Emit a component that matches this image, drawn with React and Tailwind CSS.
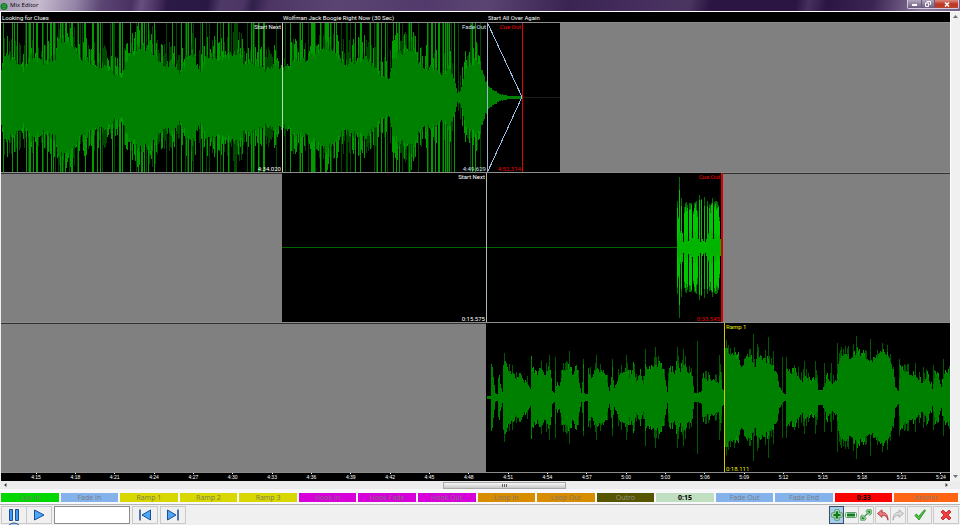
import { useState } from "react";
import clsx from "clsx";

// small seeded generator so the peaks are the same on every load
const seeded = (seed) => () => {
  seed = (seed * 1664525 + 1013904223) % 4294967296;
  return seed / 4294967296;
};

// [x, half height] key points, x runs over the 949 units of a lane
const LOOKING = [
  [0, 30], [5, 44], [14, 38], [22, 28], [29, 42], [45, 36], [54, 40], [56, 60], [70, 56], [75, 46],
  [85, 38], [95, 34], [108, 30], [112, 22], [121, 22], [126, 40], [140, 54], [150, 52], [157, 38],
  [165, 33], [173, 38], [178, 24], [190, 50], [199, 26], [205, 40], [215, 42], [225, 40], [235, 46],
  [243, 35], [255, 36], [265, 28], [275, 36], [282, 28], [295, 38], [305, 40], [318, 50], [325, 54],
  [335, 42], [345, 35], [365, 42], [375, 28], [380, 20], [388, 20], [392, 42], [403, 48], [410, 54],
  [418, 34], [430, 30], [440, 24], [448, 30], [454, 14], [456, 5], [459, 6], [465, 30], [475, 38],
  [479, 34], [482, 22], [487, 11], [492, 7], [499, 3], [508, 1], [522, 1],
];

const START_ALL = [
  [486, 1], [489, 1], [490, 36], [492, 20], [494, 4], [496, 3], [497, 20], [499, 14], [501, 5],
  [502, 34], [505, 36], [506, 27], [510, 24], [512, 25], [515, 18], [519, 25], [523, 14], [526, 14],
  [529, 8], [530, 38], [531, 26], [535, 22], [539, 30], [544, 22], [547, 30], [549, 22], [551, 6],
  [553, 4], [554, 28], [555, 12], [558, 12], [562, 26], [568, 28], [572, 23], [575, 30], [578, 14],
  [580, 4], [582, 28], [583, 4], [586, 3], [587, 28], [590, 19], [595, 30], [599, 26], [603, 26],
  [605, 17], [608, 6], [611, 26], [613, 9], [619, 24], [625, 28], [628, 20], [632, 30], [635, 15],
  [639, 25], [642, 12], [644, 30], [648, 29], [654, 32], [660, 33], [664, 17], [666, 5], [668, 28],
  [673, 24], [676, 33], [679, 27], [683, 34], [687, 24], [691, 20], [693, 4], [696, 4], [698, 5],
  [700, 6], [701, 20], [707, 17], [712, 17], [717, 14], [719, 26], [721, 8], [723, 5], [724, 50],
  [727, 42], [731, 43], [737, 40], [741, 30], [745, 44], [751, 36], [754, 30], [756, 43], [762, 40],
  [769, 32], [775, 27], [778, 10], [782, 4], [784, 3], [785, 30], [789, 25], [795, 24], [801, 15],
  [803, 24], [809, 14], [815, 20], [817, 8], [821, 7], [826, 20], [831, 13], [836, 18], [837, 34],
  [842, 44], [849, 41], [855, 44], [863, 41], [869, 37], [879, 44], [886, 42], [892, 28], [894, 10],
  [897, 6], [899, 30], [904, 25], [913, 22], [921, 14], [926, 22], [931, 8], [933, 20], [936, 25],
  [940, 10], [943, 24], [949, 25],
];

const START_ALL_SPIKES = {
  554: 40, 548: 42, 568: 46, 582: 38, 595: 42, 611: 38, 625: 42, 644: 48, 654: 50, 676: 50, 682: 48,
  696: 56, 718: 42, 752: 63, 757: 50, 767: 60, 772: 46, 781: 40, 785: 40, 803: 36, 814: 36, 823: 34,
  830: 34, 836: 54, 842: 48, 855: 61, 865: 46, 869: 58, 886: 52, 892: 30, 898: 38, 907: 30, 914: 34,
  922: 30, 932: 32, 942: 38,
};

const level = (points, x) => {
  const i = points.findIndex((p) => p[0] > x);
  if (i < 1) return i === 0 ? 0 : points[points.length - 1][1];
  const [x0, y0] = points[i - 1];
  const [x1, y1] = points[i];
  return y0 + ((y1 - y0) * (x - x0)) / (x1 - x0);
};

const bar = (x, up, down = up, mid = 74) =>
  `M${x} ${Math.round(mid - up)}h1V${Math.round(mid + 1 + down)}h-1z`;

const buildLooking = () => {
  const rand = seeded(41);
  const out = { dark: "", body: "", bright: "" };
  for (let x = 0; x < 522; x++) {
    const base = level(LOOKING, x);
    const body = base * (0.86 + rand() * 0.22);
    const pick = rand();
    const tall = rand();
    const quiet = x > 450 && x < 462;
    if (x < 480 && (!quiet || pick < 0.45)) {
      if (pick < 0.32) {
        out.bright += bar(x, tall < 0.6 ? 74 : body + 18, tall < 0.5 ? 74 : body + 16);
      } else if (pick < 0.66) {
        out.dark += bar(x, tall < 0.4 ? 74 : body + tall * 22, tall < 0.32 ? 74 : body + tall * 20);
      } else if (pick < 0.84) {
        out.bright += bar(x, body + tall * 16);
      }
    }
    out.body += bar(x, body);
  }
  return out;
};

const buildStartAll = () => {
  const rand = seeded(7);
  const out = { dark: "", body: "", bright: "" };
  for (let x = 486; x < 949; x++) {
    const base = level(START_ALL, x);
    const body = base * (0.92 + rand() * 0.14);
    const pick = rand();
    if (START_ALL_SPIKES[x]) out.dark += bar(x, START_ALL_SPIKES[x]);
    if (base > 10 && pick < 0.2) out.dark += bar(x, body + 8);
    else if (base > 10 && pick < 0.38) out.bright += bar(x, body + 4);
    out.body += bar(x, body);
  }
  return out;
};

const buildWolfman = () => {
  const rand = seeded(19);
  const out = { dark: "", body: "", bright: "" };
  const columns = [
    46, 30, 70, 16, 49, 14, 5, 40, 44, 45, 42, 6, 44, 44, 44, 9, 36, 44, 45, 46, 36, 8, 52, 5, 48, 8,
    6, 50, 5, 8, 46, 14, 43, 42, 44, 49, 8, 45, 46, 46, 45, 42, 30, 8, 3,
  ];
  columns.forEach((h, i) => {
    const x = 676 + i;
    out.dark += bar(x, h);
    out.bright += bar(x, h * (0.8 + rand() * 0.18));
    out.body += bar(x, Math.min(h, 6 + rand() * 12));
  });
  return out;
};

const LOOKING_WAVE = buildLooking();
const WOLFMAN_WAVE = buildWolfman();
const START_ALL_WAVE = buildStartAll();

const TIMES = [
  "4:15", "4:18", "4:21", "4:24", "4:27", "4:30", "4:33", "4:36", "4:39", "4:42", "4:45", "4:48",
  "4:51", "4:54", "4:57", "5:00", "5:03", "5:06", "5:09", "5:12", "5:15", "5:18", "5:21", "5:24",
];

const CUES = [
  { label: "Cue In", color: "bg-[#00d800] text-[#6c7c6c]" },
  { label: "Fade In", color: "bg-[#84b2ea] text-[#787c84]" },
  { label: "Ramp 1", color: "bg-[#d8d800] text-[#7c7c54]" },
  { label: "Ramp 2", color: "bg-[#d8d800] text-[#7c7c54]" },
  { label: "Ramp 3", color: "bg-[#d8d800] text-[#7c7c54]" },
  { label: "Hook In", color: "bg-[#d800d8] text-[#807080]" },
  { label: "Hook Fade", color: "bg-[#d800d8] text-[#807080]" },
  { label: "Hook Out", color: "bg-[#d800d8] text-[#807080]" },
  { label: "Loop In", color: "bg-[#d88c00] text-[#807864]" },
  { label: "Loop Out", color: "bg-[#d88c00] text-[#807864]" },
  { label: "Outro", color: "bg-[#565600] text-[#949488]" },
  { label: "0:15", color: "bg-[#c0dec0] text-black font-bold" },
  { label: "Fade Out", color: "bg-[#84b2ea] text-[#787c84]" },
  { label: "Fade End", color: "bg-[#84b2ea] text-[#787c84]" },
  { label: "0:33", color: "bg-[#ff0000] text-black font-bold" },
  { label: "Anchor", color: "bg-[#ff6414] text-[#8c7870]" },
];

const Wave = ({ wave, dark, body, bright, children }) => (
  <svg
    className="col-start-1 row-start-1 h-full min-h-0 w-full"
    viewBox="0 0 949 149"
    preserveAspectRatio="none"
    shapeRendering="crispEdges"
    aria-hidden="true"
  >
    <path d={wave.dark} fill={dark} />
    <path d={wave.bright} fill={bright} />
    <path d={wave.body} fill={body} />
    {children}
  </svg>
);

const Marker = ({ name, time, className }) => (
  <div
    className={clsx(
      "flex flex-col justify-between overflow-hidden whitespace-nowrap",
      className
    )}
  >
    <span>{name}</span>
    <span>{time}</span>
  </div>
);

const Lane = ({ children }) => (
  <div className="grid min-h-0 flex-1 grid-cols-1 grid-rows-1 border-b border-[#8c8c8c]">
    {children}
  </div>
);

const ToolButton = ({ label, active, className, children }) => (
  <button
    type="button"
    aria-label={label}
    className={clsx(
      "flex h-[18px] items-center justify-center border",
      active ? "border-[#3c4c5c] bg-[#a4ccf0]" : "border-[#c9c9c9] bg-[#f0f0f0]",
      className
    )}
  >
    {children}
  </button>
);

const TitleBar = () => (
  <header className="flex h-[11px] shrink-0 items-start justify-between bg-[linear-gradient(100deg,#a79ab4_0px,#c4b9cd_40px,#9484a6_75px,#5c4674_100px,#4a3163_130px,#665080_140px,#4a3163_155px,#2c1a46_165px,#2a1844_205px,#4f3a66_218px,#4b3565_240px,#30204a_250px,#4c3562_265px,#5a4572_330px,#523b6c_420px,#5a4572_480px,#3a2452_560px,#473060_640px,#4a3560_680px,#2b1643_700px,#2b1643_785px,#46305f_797px,#2b1643_815px,#3b2553_860px,#8a769a_910px,#6d5a80_960px)]">
    <div className="flex items-center gap-[2px]">
      <svg className="size-2" viewBox="0 0 8 8" aria-hidden="true">
        <circle cx="4" cy="4.5" r="3.5" fill="#0c7a24" />
        <path d="M2 3.2q2-1.2 4 0M1.800 5q2.200-1.200 4.400 0M2.400 6.600q1.600-.8 3.200 0" stroke="#5fc46c" strokeWidth=".6" fill="none" />
      </svg>
      <h1 className="font-['Open_Sans',sans-serif] text-[6px] leading-[11px] text-black">Mix Editor</h1>
    </div>
    <div className="mr-px flex h-[9px] overflow-hidden rounded-b-[2px] border border-t-0 border-[#d5cadd]">
      <button type="button" aria-label="Minimize" className="flex w-[14px] items-end justify-center border-r border-[#6b5a7d] bg-linear-to-b from-[#b3a6bf] to-[#6d5b80] pb-[2px]">
        <span className="h-[2px] w-[5px] bg-white" />
      </button>
      <button type="button" aria-label="Restore" className="flex w-[13px] items-center justify-center border-r border-[#6b5a7d] bg-linear-to-b from-[#b3a6bf] to-[#6d5b80]">
        <svg className="h-[6px] w-[6px]" viewBox="0 0 6 6" fill="none" stroke="#fff" aria-hidden="true">
          <path d="M2 1.500V.5h3.500v3h-1M.5 2h3v3.500h-3z" />
        </svg>
      </button>
      <button type="button" aria-label="Close" className="flex w-[23px] items-center justify-center bg-linear-to-b from-[#d98a80] via-[#c0341f] to-[#b8452f]">
        <svg className="h-[5px] w-[6px]" viewBox="0 0 6 5" stroke="#fff" strokeWidth="1.500" aria-hidden="true">
          <path d="M1 .5l4 4M5 .5l-4 4" />
        </svg>
      </button>
    </div>
  </header>
);

const Tracks = () => (
  <main className="flex min-w-0 flex-1 flex-col bg-black font-['Roboto',sans-serif] text-[6px] leading-[7px] text-white">
    <div className="grid h-[10px] shrink-0 grid-cols-[281fr_205fr_463fr] items-center whitespace-nowrap">
      <h2 className="pl-px">Looking for Clues</h2>
      <h2 className="pl-px">Wolfman Jack Boogie Right Now (30 Sec)</h2>
      <h2 className="pl-px">Start All Over Again</h2>
    </div>
    <div className="flex min-h-0 flex-1 flex-col border-t border-[#8c8c8c]">
      <Lane>
        <Wave wave={LOOKING_WAVE} dark="#004a00" body="#008000" bright="#009c00">
          <path d="M522 74h37v1h-37z" fill="#1c1c1c" />
          <path d="M487 1L521 74L487 148" stroke="#9cc0e4" fill="none" />
        </Wave>
        <div className="col-start-1 row-start-1 grid grid-cols-[282fr_205fr_35fr_37fr_390fr] text-right">
          <Marker name="Start Next" time="4:34.020" className="border-r border-[#b8dcb8] pr-px" />
          <Marker name="Fade Out" time="4:49.629" className="border-r border-[#9cb8c8] pr-px text-[#cfe4f4]" />
          <Marker name="Cue Out" time="4:52.314" className="border-r border-[#e00000] pr-px text-[#f00000]" />
          <div />
          <div className="bg-[#808080]" />
        </div>
      </Lane>
      <Lane>
        <Wave wave={WOLFMAN_WAVE} dark="#007000" body="#00b400" bright="#00c800">
          <path d="M281 74h395v1H281z" fill="#006400" />
        </Wave>
        <div className="col-start-1 row-start-1 grid grid-cols-[281fr_205fr_236fr_227fr] text-right">
          <div className="border-t border-[#303030] bg-[#808080]" />
          <Marker name="Start Next" time="0:15.575" className="border-r border-[#a8bca8] pr-px" />
          <Marker name="Cue Out" time="0:33.545" className="border-r-2 border-[#d80000] pr-px text-[#f00000]" />
          <div className="border-t border-[#303030] bg-[#808080]" />
        </div>
      </Lane>
      <Lane>
        <Wave wave={START_ALL_WAVE} dark="#005a00" body="#008000" bright="#009600" />
        <div className="col-start-1 row-start-1 grid grid-cols-[485fr_238fr_226fr]">
          <div className="border-t border-[#303030] bg-[#808080]" />
          <div />
          <Marker name="Ramp 1" time="0:18.111" className="border-l border-[#d8c800] pl-px text-[#e8e800]" />
        </div>
      </Lane>
    </div>
    <ol className="flex h-[8px] shrink-0 justify-between pr-px pl-[27px] font-['Liberation_Sans',sans-serif] text-[5px] leading-[7px]">
      {TIMES.map((time) => (
        <li key={time} className="flex w-4 flex-col items-center">
          <span className="h-px w-px bg-white" />
          {time}
        </li>
      ))}
    </ol>
  </main>
);

const CueBar = () => (
  <nav className="flex shrink-0 gap-[2px] border-b border-[#b4b4b4] bg-[#f8f8fa] pt-[4px] pr-[2px] pb-[2px] pl-px">
    {CUES.map((cue, i) => (
      <button
        key={cue.label}
        type="button"
        className={clsx(
          "flex h-[9px] basis-0 items-center justify-center font-['Open_Sans',sans-serif] text-[7px] leading-[9px] whitespace-nowrap",
          i === CUES.length - 1 ? "grow-[64]" : "grow-[58]",
          cue.color
        )}
      >
        {cue.label}
      </button>
    ))}
  </nav>
);

const Toolbar = () => {
  const [position, setPosition] = useState("");

  return (
    <footer className="flex h-5 shrink-0 items-center gap-[2px] overflow-hidden bg-[#f0f0f0] px-px">
      <div className="flex">
        <div className="relative">
          <ToolButton label="Pause" className="w-[26px]">
            <svg className="h-3 w-3" viewBox="0 0 12 12" aria-hidden="true">
              <path d="M1.500.5h3v11h-3zM7.500.5h3v11h-3z" fill="#3c9cf4" stroke="#1c4c94" />
            </svg>
          </ToolButton>
          <svg className="absolute top-[16px] left-[5px] h-4 w-4" viewBox="0 0 16 16" aria-hidden="true">
            <circle cx="8" cy="8" r="7" fill="#a8d4f4" stroke="#2c4c74" />
          </svg>
        </div>
        <ToolButton label="Play" className="w-[25px] border-l-0">
          <svg className="h-3 w-3" viewBox="0 0 12 12" aria-hidden="true">
            <path d="M1.500 1L11 6l-9.500 5z" fill="#4ca8f8" stroke="#1c4c94" />
          </svg>
        </ToolButton>
      </div>
      <input
        aria-label="Position"
        value={position}
        onChange={(e) => setPosition(e.target.value)}
        className="h-[18px] w-[76px] border border-[#8c8c8c] bg-white px-1 text-[8px]"
      />
      <ToolButton label="Previous" className="w-[26px]">
        <svg className="h-3 w-3" viewBox="0 0 12 12" aria-hidden="true">
          <path d="M1 .5v11" stroke="#1c4c94" strokeWidth="1.500" />
          <path d="M11.500 1v10L3 6z" fill="#4ca8f8" stroke="#1c4c94" />
        </svg>
      </ToolButton>
      <ToolButton label="Next" className="w-[26px]">
        <svg className="h-3 w-3" viewBox="0 0 12 12" aria-hidden="true">
          <path d="M11 .5v11" stroke="#1c4c94" strokeWidth="1.500" />
          <path d="M.5 1v10L9 6z" fill="#4ca8f8" stroke="#1c4c94" />
        </svg>
      </ToolButton>
      <div className="ml-auto flex gap-px">
        <div className="flex">
          <ToolButton label="Zoom in" active className="w-[15px]">
            <svg className="h-3 w-3 shrink-0" viewBox="0 0 12 12" aria-hidden="true">
              <path d="M4 .8h4l.4 2.800 2.800.4v4l-2.800.4L8 11.200H4l-.4-2.800L.8 8V4l2.800-.4z" fill="#e4f4e4" stroke="#3c8c4c" strokeWidth=".9" />
              <path d="M6 2.300v7.400M2.300 6h7.400" stroke="#0c7c1c" strokeWidth="2.600" />
            </svg>
          </ToolButton>
          <ToolButton label="Zoom out" className="w-[15px] border-l-0">
            <svg className="h-3 w-3 shrink-0" viewBox="0 0 12 12" aria-hidden="true">
              <rect x=".5" y="3.500" width="11" height="5" rx="1" fill="#e4f4e4" stroke="#5c9c6c" />
              <path d="M2 6h8" stroke="#0c7c1c" strokeWidth="3" />
            </svg>
          </ToolButton>
          <ToolButton label="Zoom to fit" className="w-[15px] border-l-0">
            <svg className="h-3 w-3 shrink-0" viewBox="0 0 12 12" aria-hidden="true">
              <path d="M3 9l6-6" stroke="#3c9c4c" strokeWidth="1.500" />
              <path d="M7 .7h4.300V5L9.500 6.200 5.800 2.500zM.7 7l1.800-1.200 3.700 3.700L5 11.300H.7z" fill="#a4d4a4" stroke="#4c9c5c" strokeWidth=".8" />
              <path d="M7.800 2.200h2v2zM2.200 7.800v2h2z" fill="#0c7c1c" stroke="#0c7c1c" strokeWidth=".6" />
            </svg>
          </ToolButton>
        </div>
        <div className="flex">
          <ToolButton label="Undo" className="w-4">
            <svg className="h-3 w-3 shrink-0" viewBox="0 0 12 12" aria-hidden="true">
              <path d="M.5 4.500L5 .8v2.400c4 0 6 3 6 8-1-3.500-2.500-5-6-5v2.200z" fill="#ec7c7c" stroke="#a42c34" strokeWidth=".8" />
            </svg>
          </ToolButton>
          <ToolButton label="Redo" className="w-[15px] border-l-0">
            <svg className="h-3 w-3 shrink-0" viewBox="0 0 12 12" aria-hidden="true">
              <path d="M11.500 4.500L7 .8v2.400c-4 0-6 3-6 8 1-3.500 2.500-5 6-5v2.200z" fill="#dcdcdc" stroke="#a4a4a4" strokeWidth=".8" />
            </svg>
          </ToolButton>
        </div>
        <ToolButton label="OK" className="w-[25px]">
          <svg className="h-3 w-3" viewBox="0 0 12 12" aria-hidden="true">
            <path d="M.8 6.500L2.500 5l2 2.500L10.500.8l1 .7-6.500 9.500z" fill="#4cc43c" stroke="#1c8420" strokeWidth=".8" />
          </svg>
        </ToolButton>
        <ToolButton label="Cancel" className="w-[26px]">
          <svg className="h-3 w-3" viewBox="0 0 12 12" aria-hidden="true">
            <path d="M1 3l2-2 3 3 3-3 2 2-3 3 3 3-2 2-3-3-3 3-2-2 3-3z" fill="#f43c3c" stroke="#b41c24" strokeWidth=".8" />
          </svg>
        </ToolButton>
      </div>
    </footer>
  );
};

const App = () => (
  <div className="flex h-screen flex-col overflow-hidden bg-[#f0f0f0] font-['Liberation_Sans',sans-serif]">
    <TitleBar />
    <div className="flex min-h-0 flex-1 border-t border-white pl-px">
      <Tracks />
      <div className="flex w-[10px] shrink-0 flex-col items-center justify-between border-l border-white bg-[#f0f0f0] py-[3px]">
        <svg className="h-[3px] w-[5px]" viewBox="0 0 5 3" aria-hidden="true">
          <path d="M0 3L2.500 0 5 3z" fill="#707070" />
        </svg>
        <svg className="h-[3px] w-[5px]" viewBox="0 0 5 3" aria-hidden="true">
          <path d="M0 0l2.500 3L5 0z" fill="#707070" />
        </svg>
      </div>
    </div>
    <div className="flex h-2 shrink-0 items-center bg-[#ececec] pr-[12px] pl-1">
      <svg className="h-[4px] w-[3px]" viewBox="0 0 3 4" aria-hidden="true">
        <path d="M2.500 0L0 2l2.500 2z" fill="#404040" />
      </svg>
      <div className="grid flex-1 grid-cols-[436fr_122fr_379fr]">
        <div className="col-start-2 flex h-[7px] items-center justify-center gap-px border border-[#a8a8a8] bg-linear-to-b from-[#f8f8f8] to-[#c8c8c8]">
          <span className="h-[3px] w-px bg-[#606060]" />
          <span className="h-[3px] w-px bg-[#606060]" />
          <span className="h-[3px] w-px bg-[#606060]" />
        </div>
      </div>
      <svg className="h-[4px] w-[3px]" viewBox="0 0 3 4" aria-hidden="true">
        <path d="M.5 0L3 2 .5 4z" fill="#404040" />
      </svg>
    </div>
    <CueBar />
    <Toolbar />
  </div>
);

export default App;
